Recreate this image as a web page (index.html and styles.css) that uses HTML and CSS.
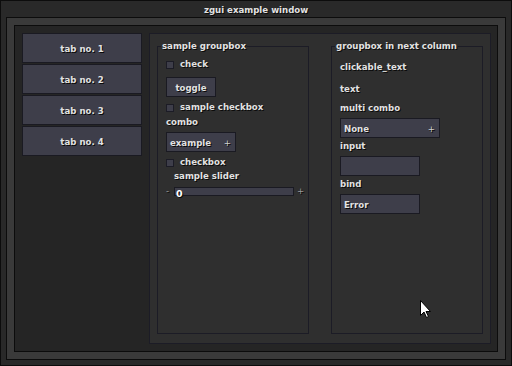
FILE: index.html
```html
<!DOCTYPE html>
<html lang="en">
<head>
    <meta charset="UTF-8">
    <title>zgui example window</title>
    <link rel="stylesheet" href="styles.css">
</head>
<body>
    <div class="window">
        <div class="titlebar">zgui example window</div>
        <div class="frame">
            <div class="inner">
                <div class="tabs">
                    <div class="tab">tab no. 1</div>
                    <div class="tab">tab no. 2</div>
                    <div class="tab">tab no. 3</div>
                    <div class="tab">tab no. 4</div>
                </div>
                <div class="panel">
                    <fieldset class="groupbox">
                        <legend>sample groupbox</legend>
                        <div class="group-body">
                            <div class="check-row row-check"><span class="box"></span>check</div>
                            <div class="button toggle">toggle</div>
                            <div class="check-row row-sample"><span class="box"></span>sample checkbox</div>
                            <div class="label row-combo">combo</div>
                            <div class="combo combo-small"><span>example</span><span class="plus">+</span></div>
                            <div class="check-row row-check2"><span class="box"></span>checkbox</div>
                            <div class="label slider-label">sample slider</div>
                            <div class="slider-row">
                                <span class="step">-</span>
                                <div class="slider"><span class="slider-value">0</span></div>
                                <span class="step">+</span>
                            </div>
                        </div>
                    </fieldset>
                    <fieldset class="groupbox">
                        <legend>groupbox in next column</legend>
                        <div class="group-body">
                            <div class="label row-click">clickable_text</div>
                            <div class="label row-text">text</div>
                            <div class="label row-multi">multi combo</div>
                            <div class="combo combo-wide"><span>None</span><span class="plus">+</span></div>
                            <div class="label row-input">input</div>
                            <div class="field"></div>
                            <div class="label row-input">bind</div>
                            <div class="field">Error</div>
                        </div>
                    </fieldset>
                </div>
            </div>
        </div>
        <svg class="cursor" width="13" height="20" viewBox="0 0 13 20">
            <path d="M0.5 0.5 L0.5 15.5 L4 12 L6.5 17.5 L8.5 16.5 L6 11.5 L10.5 11.5 Z" fill="#ffffff" stroke="#000000" stroke-width="1"/>
        </svg>
    </div>
</body>
</html>
```

FILE: styles.css
```css
* {
    box-sizing: border-box;
}
body {
    margin: 0;
    background-color: #292929;
    font-family: 'DejaVu Sans', Verdana, sans-serif;
    font-size: 8.6px;
    font-weight: bold;
    color: #e2e2e2;
    text-shadow: 1px 1px 0 #0a0a0a;
}
.window {
    position: relative;
    width: 512px;
    height: 366px;
    border: 1px solid #0c0c0c;
    background-color: #292929;
    padding: 0 5px 5px;
    display: flex;
    flex-direction: column;
}
.titlebar {
    height: 16px;
    line-height: 18px;
    text-align: center;
}
.frame {
    flex: 1;
    border: 1px solid #0c0c0c;
    background-color: #3a3a3a;
    padding: 7px;
    display: flex;
}
.inner {
    flex: 1;
    border: 1px solid #0c0c0c;
    background-color: #252525;
    padding: 7px 6px 7px 7px;
    display: flex;
    gap: 7px;
}
.tabs {
    width: 120px;
    display: flex;
    flex-direction: column;
    gap: 1px;
}
.tab {
    height: 30px;
    line-height: 30px;
    text-align: center;
    background-color: #3e3e4a;
    border: 1px solid #1a1a22;
}
.panel {
    flex: 1;
    border: 1px solid #1c1c26;
    background-color: #2f2f2f;
    padding: 7px 7px 9px;
    display: flex;
    gap: 22px;
}
.groupbox {
    width: 152px;
    min-width: 0;
    margin: 0;
    padding: 0;
    border: 1px solid #1c1c26;
}
.groupbox legend {
    margin-left: 3px;
    padding: 0 1px;
    line-height: 11px;
}
.group-body {
    padding: 0 8px;
    display: flex;
    flex-direction: column;
    align-items: flex-start;
}
.label,
.check-row {
    line-height: 13px;
    height: 11px;
}
.check-row {
    display: flex;
    align-items: center;
    gap: 6px;
}
.box {
    width: 8px;
    height: 8px;
    margin-top: 1px;
    background-color: #3e3e4a;
    border: 1px solid #1c1c26;
}
.button,
.combo,
.field {
    height: 20px;
    line-height: 20px;
    background-color: #3e3e4a;
    border: 1px solid #1a1a22;
}
.toggle {
    width: 50px;
    text-align: center;
    margin-top: 7px;
}
.combo {
    display: flex;
    justify-content: space-between;
    padding: 0 4px 0 3px;
}
.plus {
    font-weight: normal;
    color: #d0d0d0;
}
.combo-small {
    width: 70px;
    margin-top: 5px;
}
.combo-wide {
    width: 100px;
    margin-top: 5px;
}
.field {
    width: 80px;
    margin-top: 5px;
    padding: 0 3px;
}
.row-check { margin-top: 7px; }
.row-sample { margin-top: 5px; }
.row-combo { margin-top: 3px; }
.row-check2 { margin-top: 5px; }
.slider-label {
    margin-top: 2px;
    margin-left: 8px;
}
.slider-row {
    margin-top: 5px;
    height: 11px;
    display: flex;
    align-items: center;
    gap: 3px;
    align-self: stretch;
    margin-right: -6px;
}
.step {
    width: 5px;
    font-weight: normal;
    color: #9a9a9a;
    line-height: 11px;
}
.slider {
    width: 120px;
    height: 9px;
    background-color: #3e3e4a;
    border: 1px solid #1a1a22;
    line-height: 9px;
    padding-left: 1px;
}
.slider-value {
    color: #ffffff;
    font-size: 9.5px;
    position: relative;
    top: 1px;
}
.row-click { margin-top: 9px; }
.row-text { margin-top: 11px; }
.row-multi { margin-top: 8px; }
.row-input { margin-top: 2px; }
.cursor {
    position: absolute;
    left: 419px;
    top: 299px;
}
```
